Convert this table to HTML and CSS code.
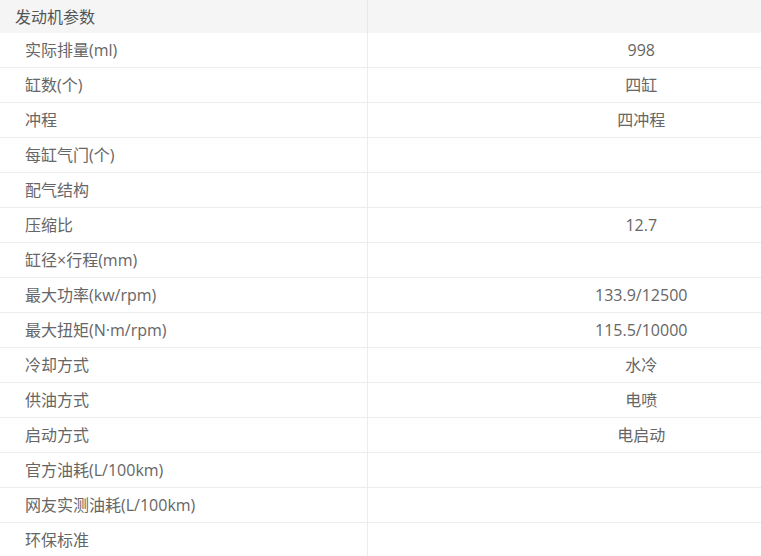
FILE: index.html
```html
<!DOCTYPE html>
<html lang="zh">
<head>
<meta charset="utf-8">
<link rel="stylesheet" href="styles.css">
</head>
<body>
<table class="spec">
  <colgroup><col class="c-label"><col class="c-value"></colgroup>
  <thead>
    <tr class="head"><th>发动机参数</th><th></th></tr>
  </thead>
  <tbody>
    <tr><td class="label">实际排量(ml)</td><td class="value">998</td></tr>
    <tr><td class="label">缸数(个)</td><td class="value">四缸</td></tr>
    <tr><td class="label">冲程</td><td class="value">四冲程</td></tr>
    <tr><td class="label">每缸气门(个)</td><td class="value"></td></tr>
    <tr><td class="label">配气结构</td><td class="value"></td></tr>
    <tr><td class="label">压缩比</td><td class="value">12.7</td></tr>
    <tr><td class="label">缸径×行程(mm)</td><td class="value"></td></tr>
    <tr><td class="label">最大功率(kw/rpm)</td><td class="value">133.9/12500</td></tr>
    <tr><td class="label">最大扭矩(N·m/rpm)</td><td class="value">115.5/10000</td></tr>
    <tr><td class="label">冷却方式</td><td class="value">水冷</td></tr>
    <tr><td class="label">供油方式</td><td class="value">电喷</td></tr>
    <tr><td class="label">启动方式</td><td class="value">电启动</td></tr>
    <tr><td class="label">官方油耗(L/100km)</td><td class="value"></td></tr>
    <tr><td class="label">网友实测油耗(L/100km)</td><td class="value"></td></tr>
    <tr><td class="label">环保标准</td><td class="value"></td></tr>
  </tbody>
</table>
</body>
</html>
```

FILE: styles.css
```css
html, body {
  margin: 0;
  padding: 0;
  background: #fff;
  overflow: hidden;
}
body {
  font-family: "Open Sans", "Noto Sans CJK SC", sans-serif;
  font-size: 16px;
  color: #666;
}
.spec {
  border-collapse: collapse;
  width: 761px;
  table-layout: fixed;
}
.c-label { width: 367px; }
.spec th, .spec td {
  padding: 0;
  border: 1px solid #ececec;
  border-top: none;
  border-left: none;
  font-weight: normal;
  line-height: 20px;
}
.spec .head th {
  background: #f5f5f5;
  height: 33px;
  text-align: left;
  padding-left: 15px;
  color: #555;
  border-right: 1px solid #e8e8e8;
  border-bottom: none;
}
.spec .head th + th { padding-left: 0; border-right: none; }
.spec td { height: 34px; }
.spec .label { padding-left: 25px; text-align: left; }
.spec .value { text-align: center; padding-left: 154px; border-right: none; }
```
